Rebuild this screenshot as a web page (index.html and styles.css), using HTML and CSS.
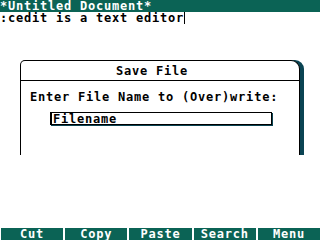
FILE: index.html
```html
<!DOCTYPE html>
<html>
	<head>
		<meta charset="UTF-8">
		<title>cedit</title>
		<link rel="stylesheet" href="styles.css">
	</head>
	<body>
		<div class="screen">
			<!--title bar-->
			<div class="titlebar">*Untitled Document*</div>
			<!--text area-->
			<div class="editor">:cedit is a text editor<span class="cursor"></span></div>

			<!--save dialog-->
			<div class="dialog">
				<div class="dialog-title">Save File</div>
				<div class="dialog-body">
					<div class="prompt">Enter File Name to (Over)write:</div>
					<div class="field">Filename</div>
				</div>
			</div>

			<!--function keys-->
			<ul class="keys">
				<li>Cut</li>
				<li>Copy</li>
				<li>Paste</li>
				<li>Search</li>
				<li>Menu</li>
			</ul>
		</div>
	</body>
</html>
```

FILE: styles.css
```css
* {
	padding: 0;
	margin: 0;
}

ul {
	list-style: none;
}

body {
	background-color: #fff;
	font-family: "DejaVu Sans Mono", "Liberation Mono", monospace;
	font-weight: bold;
	font-size: 12px;
	letter-spacing: 0.78px;
	color: #000;
}

.screen {
	width: 320px;
	height: 240px;
	display: flex;
	flex-direction: column;
}

.titlebar {
	height: 12px;
	line-height: 12px;
	background-color: #0b6355;
	color: #fff;
}

.editor {
	height: 12px;
	line-height: 12px;
	display: flex;
	align-items: center;
}

.cursor {
	display: inline-block;
	width: 1px;
	height: 12px;
	background-color: #000;
}

.dialog {
	margin: 36px 0 0 20px;
	width: 278px;
	height: 94px;
	border: 1px solid #000;
	border-bottom: none;
	border-radius: 5px 9px 0 0;
	box-shadow: 4px 0 0 #0a4453;
	background-color: #fff;
}

.dialog-title {
	height: 19px;
	line-height: 21px;
	border-bottom: 1px solid #000;
	text-align: center;
	padding-right: 16px;
}

.dialog-body {
	padding: 10px 0 0 9px;
}

.prompt {
	height: 13px;
	line-height: 13px;
}

.field {
	margin: 8px 0 0 20px;
	width: 218px;
	height: 11px;
	line-height: 12px;
	border: 1px solid #000;
	border-left-width: 2px;
	box-shadow: 1px 1px 0 #0a4453;
	padding-left: 1px;
}

.keys {
	margin-top: auto;
	height: 12px;
	display: flex;
	gap: 2px;
	padding-left: 1px;
}

.keys li {
	flex: 1;
	background-color: #0b6355;
	color: #fff;
	line-height: 12px;
	text-align: center;
}
```
